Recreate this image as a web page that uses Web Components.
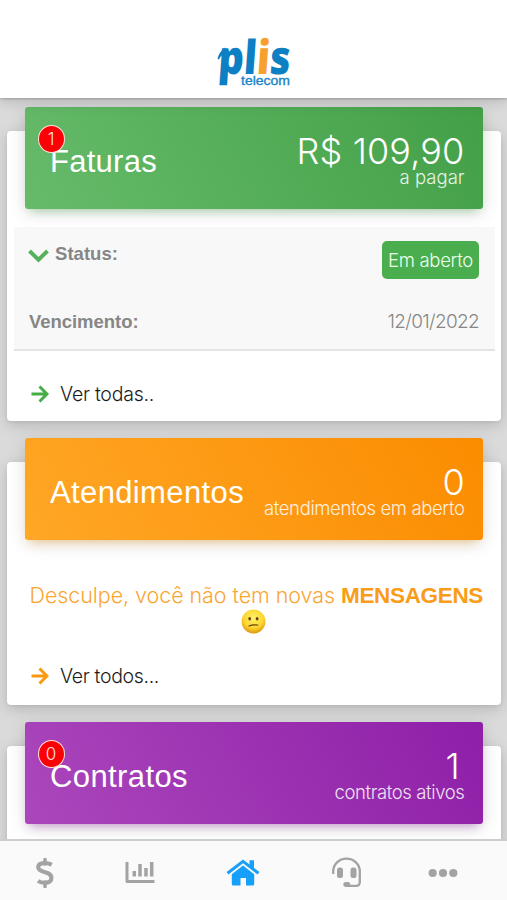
<!DOCTYPE html>
<html lang="pt-BR">
<head>
<meta charset="utf-8">
<title>Plis Telecom</title>
<style>
html,body{margin:0;height:100%;overflow:hidden}
body{font-family:"Liberation Sans",Arial,sans-serif;background:#dadada}
</style>
</head>
<body>
<plis-app></plis-app>
<script>
const define = (name, html, extra) => customElements.define(name, class extends HTMLElement {
  constructor() {
    super();
    this.attachShadow({mode: 'open'}).innerHTML = html;
  }
  connectedCallback() { if (extra) extra(this); }
});

/* One line of text whose tracking is set so that it spans the given width. */
define('fit-text', `<style>
:host{display:inline-block;white-space:nowrap}
:host([light]){font-family:Inter,"Liberation Sans",sans-serif;font-weight:300}
span{display:inline-block}
</style><span><slot></slot></span>`, el => {
  const span = el.shadowRoot.querySelector('span');
  const n = el.textContent.length, w = parseFloat(el.getAttribute('w'));
  const s = (w - span.getBoundingClientRect().width) / n;
  span.style.letterSpacing = s.toFixed(3) + 'px';
});

define('plis-logo', `<style>:host{display:block;width:76px;height:54px}svg{display:block;overflow:visible}
text{font-family:"Open Sans",sans-serif}</style>
<svg width="76" height="54" viewBox="216 34 76 54">
<g font-weight="800" font-size="44" fill="#0d80c4" transform="translate(0 74) skewX(-4) scale(1 1.060)">
<text x="217.500" y="0" textLength="72" lengthAdjust="spacingAndGlyphs">pl<tspan fill="#f7a030">i</tspan>s</text></g>
<path d="M217.500 59Q219 52 225 47.500L225 54Q220.500 55 219 59.500Z" fill="#0d80c4"/>
<text x="241" y="85.300" font-size="13.500" style="font-family:'Liberation Sans',sans-serif" stroke="#1684c6" stroke-width=".35" fill="#1684c6" textLength="49" lengthAdjust="spacingAndGlyphs">telecom</text>
</svg>`);

define('app-header', `<style>
:host{display:flex;justify-content:center;box-sizing:border-box;height:98px;padding-top:34px;background:#fff;
box-shadow:0 1px 2px rgba(0,0,0,.2),0 3px 12px rgba(0,0,0,.17);position:relative;z-index:1}
</style><slot></slot>`);

define('summary-card', `<style>
:host{display:block;box-sizing:border-box;margin:0 6px 0 7px;background:#fff;border-radius:4px;
box-shadow:0 4px 14px rgba(0,0,0,.17),0 1px 3px rgba(0,0,0,.06)}
.head{position:relative;top:-24px;display:flex;justify-content:space-between;box-sizing:border-box;height:102px;margin:0 18.500px 0 18px;
padding:0 18px 0 25px;border-radius:3px;color:#fff;background:var(--grad);box-shadow:0 4px 18px rgba(0,0,0,.12),0 6px 10px -5px var(--glow)}
.title{font-size:31px;line-height:109px}
.right{display:flex;flex-direction:column;align-items:flex-end;padding-top:27px}
.num{font-size:36px;line-height:34px;height:34px}
.sub{font-size:18.500px;line-height:18px;height:18px;opacity:.86}
.body{margin-top:-24px}
::slotted([slot=badge]){position:absolute;left:12.500px;top:18px}
</style><div class="head"><div class="title"><slot name="title"></slot></div>
<div class="right"><div class="num"><slot name="num"></slot></div><div class="sub"><slot name="sub"></slot></div></div>
<slot name="badge"></slot></div><div class="body"><slot></slot></div>`);

define('count-badge', `<style>
:host{display:block;box-sizing:border-box;width:27px;height:28px;border:1.500px solid #ffe3d8;border-radius:50%;background:#fb0007;
color:#ffe3df;font:300 17px/26px Inter,sans-serif;text-align:center}
</style><slot></slot>`);

define('invoice-details', `<style>
:host{display:block;box-sizing:border-box;height:124px;margin:18px 6px 0 7px;padding:14px 16px 0 15px;background:#f8f8f8;border-bottom:2px solid #e3e3e3}
.row{display:flex;justify-content:space-between;align-items:flex-start;color:#868686;font-size:19px}
.row+.row{margin-top:31px;line-height:24px}
b{display:flex;font-size:18.500px;line-height:24px}
.status{line-height:26px;margin-left:-1px}
svg{margin:8px 6px 0 0}
.tag{box-sizing:border-box;width:97px;height:38px;padding-left:6px;border-radius:5px;background:#4aae4f;color:#ecffec;font-size:18.500px;line-height:38px}
</style>
<div class="row"><b class="status"><svg width="21" height="14" viewBox="0 0 21 14"><path d="M1.500 2 10.500 10.700 19.500 2" fill="none" stroke="#55b25a" stroke-width="3.900"/></svg><fit-text w="63">Status:</fit-text></b>
<div class="tag"><fit-text light w="85">Em aberto</fit-text></div></div>
<div class="row"><b><fit-text w="109.500">Vencimento:</fit-text></b><fit-text light w="91.500">12/01/2022</fit-text></div>`);

define('see-more', `<style>
:host{display:flex;align-items:center;padding-left:24px;height:28px;color:#1c1c1c;font-size:19.500px;line-height:28px}
svg{margin-right:11px}
</style><svg width="18" height="18" viewBox="0 0 18 18"><path d="M.5 9H16M8.500 1.500 16 9 8.500 16.500" fill="none" stroke="var(--accent)" stroke-width="3"/></svg><slot></slot>`);

define('empty-message', `<style>
:host{display:block;padding:42px 18px 0 22.500px;color:#fa9c18}
p{display:flex;margin:0;font-size:21.500px;line-height:27px;height:28px}
b{font-size:22.500px;margin-left:6px}
.l{opacity:.9}
svg{display:block;margin:-1.500px 0 0 211.500px}
</style><p><fit-text class="l" light w="305.500">Desculpe, você não tem novas</fit-text><b><fit-text w="142">MENSAGENS</fit-text></b></p>
<svg width="25" height="25" viewBox="0 0 25 25"><defs><radialGradient id="f" cx=".5" cy=".35" r=".65"><stop offset="0" stop-color="#fff26b"/><stop offset=".65" stop-color="#fcd52e"/><stop offset="1" stop-color="#dc9410"/></radialGradient></defs>
<circle cx="12.500" cy="12.500" r="11.900" fill="url(#f)"/><ellipse cx="8.700" cy="9.800" rx="1.400" ry="1.800" fill="#65400d"/><ellipse cx="16.100" cy="9.800" rx="1.400" ry="1.800" fill="#65400d"/>
<path d="M8 17Q11.500 15.300 16.800 16" fill="none" stroke="#65400d" stroke-width="1.200" stroke-linecap="round"/></svg>`);

define('tab-bar', `<style>
:host{display:block;position:fixed;left:0;right:0;bottom:0;z-index:2;box-sizing:border-box;height:61px;background:#fafafa;border-top:2px solid #cdcdcd;color:#a3a3a3}
nav{display:grid;grid-template-columns:90px 99px 108px 99px 93px;height:59px;align-items:center;justify-items:center;padding-top:2px}
svg{display:block}
</style><nav>
<svg width="18" height="30" viewBox="0 0 18 30"><path d="M15.800 6.700Q12.500 5.100 8.500 5.100C4.500 5.100 2.200 6.600 2.200 9.300C2.200 15.500 15.400 12.300 15.400 20C15.400 23.200 12.600 24.800 8.600 24.800Q4.800 24.800 2 22.800" fill="none" stroke="currentColor" stroke-width="4.100"/><path d="M9 1.500V6M9 24V28.500" fill="none" stroke="currentColor" stroke-width="3.500" stroke-linecap="round"/></svg>
<svg style="margin-left:1px" width="30" height="24" viewBox="0 0 30 24"><path d="M2 1V20.500H29.500" fill="none" stroke="currentColor" stroke-width="3" stroke-linejoin="round"/><path d="M9.300 10V15.500M15 3V15.500M21 7V15.500M26.700 1V15.500" stroke="currentColor" stroke-width="3.500"/></svg>
<svg style="margin-left:-1px;color:#16a0fa" width="34" height="28" viewBox="0 0 34 28"><path d="M1.500 14.300 17 2.300 32.500 14.300" fill="none" stroke="currentColor" stroke-width="3"/><path d="M23.500 1.200H28V11L23.500 7.500Z" fill="currentColor"/><path d="M5.800 15.200 17 6.500 28.200 15.200V25Q28.200 26.500 26.700 26.500H20V19H14.500V26.500H7.300Q5.800 26.500 5.800 25Z" fill="currentColor"/></svg>
<svg width="31" height="31" viewBox="0 0 31 31"><path d="M2.200 17V14.500A13.300 12.800 0 0 1 28.800 14.500V25Q28.800 28.800 25 28.800H16" fill="none" stroke="currentColor" stroke-width="2.300"/><rect x="6" y="10.500" width="6" height="10.500" rx="2.500" fill="currentColor"/><rect x="19.500" y="10.500" width="6" height="10.500" rx="2.500" fill="currentColor"/><rect x="12.300" y="25" width="7" height="4.900" rx="2.400" fill="currentColor"/></svg>
<svg width="30" height="10" viewBox="0 0 30 10"><circle cx="4.700" cy="5" r="4.100" fill="currentColor"/><circle cx="15" cy="5" r="4.100" fill="currentColor"/><circle cx="25.300" cy="5" r="4.100" fill="currentColor"/></svg>
</nav>`);

define('plis-app', `<style>
:host{display:block;height:900px;overflow:hidden}
main{display:flex;flex-direction:column;gap:41px;padding-top:33.400px}
.g{height:290px;--grad:linear-gradient(60deg,#66bb6a,#43a047);--glow:rgba(76,175,80,.45);--accent:#43ad48}
.o{height:242.500px;--grad:linear-gradient(60deg,#ffa726,#fb8c00);--glow:rgba(255,152,0,.45);--accent:#fb9a10}
.p{height:242px;--grad:linear-gradient(60deg,#ab47bc,#8e1fa8);--glow:rgba(156,39,176,.45)}
.g see-more{margin-top:28.500px}
.o see-more{margin-top:28.500px}
</style>
<app-header><plis-logo></plis-logo></app-header>
<main>
<summary-card class="g"><fit-text slot="title" w="107">Faturas</fit-text><fit-text slot="num" light w="168">R$ 109,90</fit-text><fit-text slot="sub" light w="65">a pagar</fit-text><count-badge slot="badge">1</count-badge>
<invoice-details></invoice-details><see-more><fit-text light w="94">Ver todas..</fit-text></see-more></summary-card>
<summary-card class="o"><fit-text slot="title" w="194">Atendimentos</fit-text><fit-text slot="num" light w="22">0</fit-text><fit-text slot="sub" light w="200.500">atendimentos em aberto</fit-text>
<empty-message></empty-message><see-more><fit-text light w="99">Ver todos...</fit-text></see-more></summary-card>
<summary-card class="p"><fit-text slot="title" w="138">Contratos</fit-text><fit-text slot="num" light w="19">1</fit-text><fit-text slot="sub" light w="130">contratos ativos</fit-text><count-badge slot="badge">0</count-badge></summary-card>
</main>
<tab-bar></tab-bar>`);
</script>
</body>
</html>
